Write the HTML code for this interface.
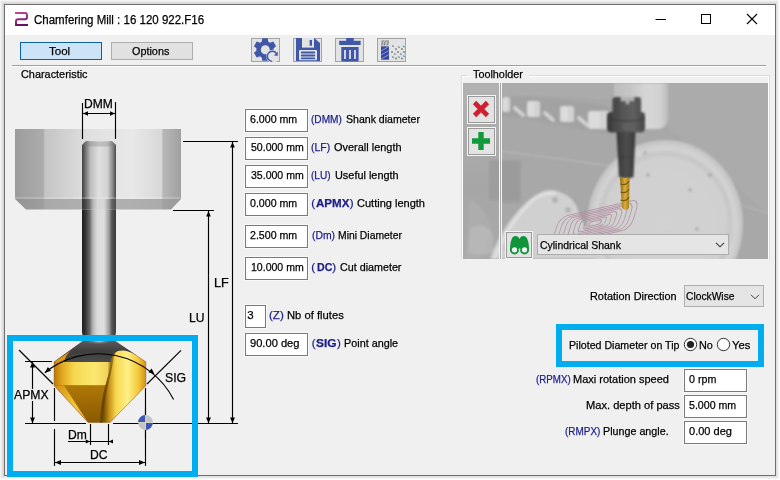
<!DOCTYPE html>
<html><head><meta charset="utf-8"><style>
html,body{margin:0;padding:0;width:780px;height:480px;overflow:hidden;background:#fff;font-family:"Liberation Sans",sans-serif;}
.a{position:absolute;box-sizing:border-box;}
.t{position:absolute;white-space:pre;transform-origin:0 0;font-family:"Liberation Sans",sans-serif;-webkit-text-stroke:0.25px currentColor;}

</style></head><body>
<div class="a" style="left:0px;top:0px;width:780px;height:480px;background:#fff"></div>
<div class="a" style="left:0px;top:0px;width:779px;height:479px;background:#f4f4f4"></div>
<div class="a" style="left:1px;top:1px;width:777px;height:477px;background:#e9e9e9"></div>
<div class="a" style="left:2px;top:2px;width:775px;height:475px;background:#e0e0e0"></div>
<div class="a" style="left:3px;top:3px;width:773px;height:473px;background:#d4d4d4"></div>
<div class="a" style="left:4px;top:4px;width:772px;height:472px;border:1px solid #6f6f6f;background:#f0f0f0"></div>
<div class="a" style="left:5px;top:5px;width:770px;height:30px;background:#fff"></div>
<svg class="a" style="left:0;top:0" width="40" height="40"><defs><linearGradient id="lg" x1="0" y1="0" x2="0.3" y2="1"><stop offset="0" stop-color="#c04a96"/><stop offset="1" stop-color="#6e0f5e"/></linearGradient></defs>
<path d="M15,13 H25.2 Q27,13 27,15 V17.3 Q27,19.2 25,19.2 H18 Q16,19.2 16,21.2 V25 H28" fill="none" stroke="url(#lg)" stroke-width="1.9"/></svg>
<svg class="a" style="left:640px;top:5px" width="135" height="30"><path d="M15.5,14.5 H26" stroke="#000" stroke-width="1" /><rect x="61.5" y="9.5" width="9" height="9" fill="none" stroke="#000" stroke-width="1"/><path d="M107,9 L117,19 M117,9 L107,19" stroke="#000" stroke-width="1.1"/></svg>
<div class="a" style="left:20px;top:42px;width:82px;height:18px;border:1px solid #0a5fa8;background:#cce4f7"></div>
<div class="a" style="left:111px;top:42px;width:82px;height:18px;border:1px solid #adadad;background:#e1e1e1"></div>
<div class="a" style="left:251px;top:38px;width:29px;height:24px;border:1px solid #a3a3a3;background:#e3e3e3"></div>
<div class="a" style="left:293px;top:38px;width:29px;height:24px;border:1px solid #a3a3a3;background:#e3e3e3"></div>
<div class="a" style="left:335px;top:38px;width:29px;height:24px;border:1px solid #a3a3a3;background:#e3e3e3"></div>
<div class="a" style="left:377px;top:38px;width:29px;height:24px;border:1px solid #a3a3a3;background:#e3e3e3"></div>
<div class="a" style="left:12px;top:65px;width:754px;height:1px;background:#a0a0a0"></div>
<div class="a" style="left:12px;top:66px;width:754px;height:1px;background:#fff"></div>
<svg class="a" style="left:240px;top:30px" width="180" height="40">
<g fill="#3f57a8"><circle cx="25" cy="19.5" r="8.6"/><path d="M21.60,12.50 L22.30,8.30 L27.70,8.30 L28.40,12.50 Z M29.36,13.06 L33.35,11.56 L36.05,16.24 L32.76,18.94 Z M32.76,20.06 L36.05,22.76 L33.35,27.44 L29.36,25.94 Z M28.40,26.50 L27.70,30.70 L22.30,30.70 L21.60,26.50 Z M20.64,25.94 L16.65,27.44 L13.95,22.76 L17.24,20.06 Z M17.24,18.94 L13.95,16.24 L16.65,11.56 L20.64,13.06 Z"/></g>
<circle cx="25.3" cy="19.7" r="4.5" fill="#e3e3e3"/>
<circle cx="32.7" cy="26.3" r="6.5" fill="#e3e3e3"/>
<path d="M36.4,23.2 A5.1,5.1 0 1 0 32.2,31.4" fill="none" stroke="#3f57a8" stroke-width="1.45"/>
<path d="M37.8,21.8 L37.8,25.8 L33.8,25.6 Z" fill="#3f57a8"/>
<g fill="#3f57a8">
<path d="M56,8 H74.2 L80,13 V31 H56 Z"/>
<rect x="62" y="8" width="12" height="9.6" fill="#e3e3e3"/>
<rect x="69.6" y="10" width="2.4" height="5.7"/>
<rect x="59" y="20" width="18" height="10.3" rx="1" fill="#e3e3e3"/>
<rect x="60.8" y="21.6" width="14.4" height="1.9" rx="0.9"/>
<rect x="60.8" y="24.5" width="14.4" height="1.9" rx="0.9"/>
<rect x="60.8" y="27.4" width="14.4" height="1.9" rx="0.9"/>
<rect x="106.2" y="8" width="7.6" height="3.2"/>
<rect x="99.2" y="10.8" width="21.4" height="4.2"/>
<path d="M101.3,17 H118.6 V30.5 Q118.6,31.6 117.5,31.6 H102.4 Q101.3,31.6 101.3,30.5 Z"/>
</g>
<g fill="#d0d4e0"><rect x="104" y="20" width="2" height="9"/><rect x="109" y="20" width="2" height="9"/><rect x="114" y="20" width="2" height="9"/></g>
<g>
<rect x="141" y="10" width="8" height="6" fill="#c4c4c4"/>
<path d="M142,15.5 Q141.5,12 143.5,10.5 M144.5,15.5 Q144,12 146.5,10.5 M147.5,15 Q148.5,12 148,10.5" stroke="#707070" stroke-width="0.9" fill="none"/>
<rect x="141" y="15.6" width="8" height="0.8" fill="#d8d0a0"/>
<rect x="141" y="16.4" width="8" height="13.3" fill="#3448a4"/>
<path d="M141,21 L149,16.5 M141,25 L149,20.5 M141,29 L149,24.5" stroke="#8a96c8" stroke-width="1"/>
<g fill="#8a9090"><circle cx="153" cy="16" r="1.1"/><circle cx="156" cy="19" r="1.1"/><circle cx="159" cy="17" r="1.1"/><circle cx="162" cy="19" r="1.1"/><circle cx="164" cy="16.5" r="1.1"/><circle cx="152" cy="22" r="1.1"/><circle cx="155" cy="24" r="1.1"/><circle cx="158" cy="22" r="1.1"/><circle cx="161" cy="24" r="1.1"/><circle cx="164" cy="22" r="1.1"/><circle cx="153" cy="27" r="1.1"/><circle cx="156" cy="28.5" r="1.1"/><circle cx="159" cy="27" r="1.1"/><circle cx="162" cy="28.5" r="1.1"/><circle cx="164" cy="26" r="1.1"/></g><g fill="#a8ecff"><circle cx="153.8" cy="15.2" r="0.8"/><circle cx="159.8" cy="16.2" r="0.8"/><circle cx="164.8" cy="15.7" r="0.8"/><circle cx="155.8" cy="23.2" r="0.8"/><circle cx="161.8" cy="23.2" r="0.8"/><circle cx="153.8" cy="26.2" r="0.8"/><circle cx="159.8" cy="26.2" r="0.8"/><circle cx="164.8" cy="25.2" r="0.8"/></g>
</g>
</svg>
<svg class="a" style="left:0;top:0" width="780" height="480"><defs>
<linearGradient id="hold" x1="15" x2="181" y1="0" y2="0" gradientUnits="userSpaceOnUse">
<stop offset="0" stop-color="#9c9c9c"/><stop offset="0.17" stop-color="#acacac"/><stop offset="0.18" stop-color="#c4c4c4"/>
<stop offset="0.45" stop-color="#e0e0e0"/><stop offset="0.7" stop-color="#e8e8e8"/><stop offset="0.885" stop-color="#d8d8d8"/>
<stop offset="0.89" stop-color="#b8b8b8"/><stop offset="1" stop-color="#a0a0a0"/></linearGradient>
<linearGradient id="holdc" x1="15" x2="181" y1="0" y2="0" gradientUnits="userSpaceOnUse">
<stop offset="0" stop-color="#939393"/><stop offset="0.17" stop-color="#9e9e9e"/><stop offset="0.18" stop-color="#a8a8a8"/>
<stop offset="0.5" stop-color="#b2b2b2"/><stop offset="0.885" stop-color="#ababab"/><stop offset="0.89" stop-color="#a2a2a2"/><stop offset="1" stop-color="#9a9a9a"/></linearGradient>
<linearGradient id="shank" x1="82" x2="116" y1="0" y2="0" gradientUnits="userSpaceOnUse">
<stop offset="0" stop-color="#1e1e1e"/><stop offset="0.1" stop-color="#333"/><stop offset="0.22" stop-color="#666"/>
<stop offset="0.32" stop-color="#b5b5b5"/><stop offset="0.45" stop-color="#dcdcdc"/><stop offset="0.65" stop-color="#dedede"/>
<stop offset="0.8" stop-color="#999"/><stop offset="0.88" stop-color="#555"/><stop offset="1" stop-color="#3a3a3a"/></linearGradient>
<linearGradient id="shankl" x1="82" x2="116" y1="0" y2="0" gradientUnits="userSpaceOnUse">
<stop offset="0" stop-color="#3e3e3e"/><stop offset="0.1" stop-color="#707070"/><stop offset="0.25" stop-color="#bdbdbd"/>
<stop offset="0.5" stop-color="#e0e0e0"/><stop offset="0.75" stop-color="#d2d2d2"/><stop offset="0.9" stop-color="#8a8a8a"/><stop offset="1" stop-color="#484848"/></linearGradient>
<linearGradient id="band" x1="54" x2="112" y1="0" y2="0" gradientUnits="userSpaceOnUse">
<stop offset="0" stop-color="#b87808"/><stop offset="0.14" stop-color="#e0a820"/><stop offset="0.35" stop-color="#f6d850"/>
<stop offset="0.7" stop-color="#fbe870"/><stop offset="0.92" stop-color="#f2d458"/><stop offset="1" stop-color="#7a5400"/></linearGradient>
<linearGradient id="lowc" x1="0" x2="0" y1="385" y2="422" gradientUnits="userSpaceOnUse">
<stop offset="0" stop-color="#b07808"/><stop offset="1" stop-color="#8a5a00"/></linearGradient>
<linearGradient id="flute" x1="104" x2="147" y1="0" y2="0" gradientUnits="userSpaceOnUse">
<stop offset="0" stop-color="#7a5200"/><stop offset="0.12" stop-color="#c89018"/><stop offset="0.28" stop-color="#f8d850"/>
<stop offset="0.55" stop-color="#fff088"/><stop offset="0.8" stop-color="#f4c838"/><stop offset="1" stop-color="#cc8810"/></linearGradient>
<linearGradient id="lface" x1="54" x2="88" y1="385" y2="422" gradientUnits="userSpaceOnUse">
<stop offset="0" stop-color="#d09010"/><stop offset="0.6" stop-color="#f4c83a"/><stop offset="1" stop-color="#e8b020"/></linearGradient>
<radialGradient id="hl" cx="99" cy="341" r="16" fx="99" fy="341" gradientUnits="userSpaceOnUse" gradientTransform="translate(99 341) scale(1 0.25) translate(-99 -341)">
<stop offset="0" stop-color="#d8d8d8"/><stop offset="1" stop-color="#444" stop-opacity="0"/></radialGradient>
<linearGradient id="cap" x1="0" x2="0" y1="341" y2="362" gradientUnits="userSpaceOnUse">
<stop offset="0" stop-color="#5a5a5a"/><stop offset="0.5" stop-color="#3e3e3e"/><stop offset="1" stop-color="#4a4a4a"/></linearGradient>
</defs>
<path d="M15,129 H181 V199 H15 Z" fill="url(#hold)"/>
<path d="M15,199 H181 L171,209.5 H26 Z" fill="url(#holdc)"/>
<path d="M82,145 L86,141 H112 L116,145 V199 H82 Z" fill="url(#shankl)"/>
<path d="M82.5,145 L86,141.5 H112 L115.5,145 V146.5 H82.5 Z" fill="#777" opacity="0.3"/>
<path d="M82,199 H116 V209.5 H82 Z" fill="url(#shank)" opacity="0.85"/>
<rect x="15" y="197.5" width="166" height="1" fill="#fff" opacity="0.35"/>
<path d="M82,209.5 H116 V332 Q116,335 114,338 L113,341 H85 L84,338 Q82,335 82,332 Z" fill="url(#shank)"/>
<path d="M83,341 H115 L146,362 V385.5 L110,422.5 H88 L54,385.5 V362 Z" fill="#7a5a10"/>
<path d="M83,341 H115 L136,355 Q120,358 112,362 H64 L54,362 Z" fill="url(#cap)"/>
<rect x="82" y="341" width="34" height="4" fill="url(#hl)"/>
<path d="M54,362 L72,350 Q66,354 64,362 Z" fill="#d89a10"/>
<path d="M54,362 H112 V385.5 H54 Z" fill="url(#band)"/>
<path d="M63,385.5 H108.5 L101,422.5 H88 Z" fill="url(#lowc)"/>
<path d="M54,385.5 H64 L88,422.5 Z" fill="url(#lface)"/>
<path d="M111,362 Q112,353 118,351 Q126,349 136,355 L146,362 V385.5 L110,422.5 H100 Q101,402 105,387 Q109,374 111,362 Z" fill="url(#flute)"/>
<path d="M111,362 Q109,374 105,387 Q101,402 100,422.5 H102.5 Q104,402 107.5,387 Q111,374 113,362 Q113.5,356 116,352 Q112,354 111,362 Z" fill="#5a3c00" opacity="0.55"/>
<path d="M83,341 L54,362 V385.5 L88,422.5 M115,341 L146,362 V385.5 L110,422.5" fill="none" stroke="#7a3060" stroke-width="0.5" opacity="0.6"/>
<path d="M82.5,103 V139 M115.5,102 V139 M83,113.5 H115" stroke="#000" stroke-width="1.15" fill="none"/>
<path d="M83,113.5 L88,111.25 L88,115.75 Z" fill="#000"/>
<path d="M115,113.5 L110,111.25 L110,115.75 Z" fill="#000"/>
<path d="M183,141.5 H238 M173,210.5 H214 M232.5,142 V423 M208.5,211 V423 M25,423.5 H86 M113,423.5 H238" stroke="#000" stroke-width="1.15" fill="none"/>
<path d="M232.5,142 L230.2,147.5 L234.8,147.5 Z" fill="#000"/>
<path d="M208.5,211 L206.2,216.5 L210.8,216.5 Z" fill="#000"/>
<path d="M232.5,423 L230.0,417.5 L235.0,417.5 Z" fill="#000"/>
<path d="M208.5,423 L206.0,417.5 L211.0,417.5 Z" fill="#000"/>
<path d="M19,350 L53,384 M25,361.5 H52 M32.5,362 V423 M54.5,388 V421 M54.5,429 V466 M145.5,388 V466 M147,384 L181,350.3" stroke="#000" stroke-width="1.15" fill="none"/>
<path d="M32.5,362 L30.0,367.5 L35.0,367.5 Z" fill="#000"/>
<path d="M32.5,423 L30.0,417.5 L35.0,417.5 Z" fill="#000"/>
<path d="M90.5,424 V445 M108.5,424 V445 M68,441.5 H112" stroke="#000" stroke-width="1.15" fill="none"/>
<path d="M90,441.5 L85.8,439.6 L85.8,443.4 Z" fill="#000"/>
<path d="M108.8,441.5 L113.0,439.6 L113.0,443.4 Z" fill="#000"/>
<path d="M55,462.5 H145" stroke="#000" stroke-width="1.15" fill="none"/>
<path d="M55,462.5 L61,460.0 L61,465.0 Z" fill="#000"/>
<path d="M145,462.5 L139,460.0 L139,465.0 Z" fill="#000"/>
<path d="M44.8,372.7 A85,85 0 0 1 173.6,399.4" stroke="#000" stroke-width="1.15" fill="none"/>
<path d="M44.80,372.70 L47.88,366.98 L51.03,370.86 Z" fill="#000"/>
<path d="M154.50,374.20 L148.33,372.15 L151.61,368.38 Z" fill="#000"/>
<circle cx="145.5" cy="422.5" r="7.4" fill="#c4c4c4"/>
<path d="M145.5,422.5 V415.1 A7.4,7.4 0 0 0 138.1,422.5 Z M145.5,422.5 V429.9 A7.4,7.4 0 0 0 152.9,422.5 Z" fill="#3d55b5"/>
<path d="M138,422.5 H153 M145.5,415 V430" stroke="#e8e4c8" stroke-width="1" opacity="0.8"/>
<path d="M145.5,407 V415 M145.5,430 V438 M130,423.5 H138 M153,423.5 H160" stroke="#000" stroke-width="1.1"/>
</svg>
<div class="a" style="left:7px;top:335px;width:191px;height:142px;border:6px solid #00adef"></div>
<div class="a" style="left:556px;top:324px;width:208px;height:43px;border:6px solid #00adef"></div>
<svg class="a" style="left:462px;top:83px" width="308" height="176" viewBox="462 83 308 176"><defs>
<filter id="bl" x="-10%" y="-10%" width="120%" height="120%"><feGaussianBlur stdDeviation="0.8"/></filter>
<filter id="bl2" x="-20%" y="-20%" width="140%" height="140%"><feGaussianBlur stdDeviation="3"/></filter>
<linearGradient id="spin" x1="614" x2="668" y1="0" y2="0" gradientUnits="userSpaceOnUse">
<stop offset="0" stop-color="#bdbdbd"/><stop offset="0.3" stop-color="#c6c6c6"/><stop offset="0.6" stop-color="#d6d6d6"/><stop offset="0.85" stop-color="#d2d2d2"/><stop offset="1" stop-color="#bcbcbc"/></linearGradient>
<linearGradient id="hold2" x1="608" x2="645" y1="0" y2="0" gradientUnits="userSpaceOnUse">
<stop offset="0" stop-color="#3a3a3a"/><stop offset="0.4" stop-color="#555"/><stop offset="0.7" stop-color="#606060"/><stop offset="1" stop-color="#444"/></linearGradient>
<linearGradient id="cone2" x1="616" x2="636" y1="0" y2="0" gradientUnits="userSpaceOnUse">
<stop offset="0" stop-color="#333"/><stop offset="0.5" stop-color="#4e4e4e"/><stop offset="1" stop-color="#3a3a3a"/></linearGradient>
<linearGradient id="lcol" x1="0" x2="0" y1="83" y2="259" gradientUnits="userSpaceOnUse">
<stop offset="0" stop-color="#b2b2b2"/><stop offset="0.6" stop-color="#a6a6a6"/><stop offset="1" stop-color="#aaaaaa"/></linearGradient>
<radialGradient id="plate" cx="665" cy="224" r="80" gradientTransform="translate(665 224) scale(0.975 1.05) translate(-665 -224)" gradientUnits="userSpaceOnUse">
<stop offset="0" stop-color="#d2d2d2"/><stop offset="0.78" stop-color="#d0d0d0"/><stop offset="0.84" stop-color="#c6c6c6"/><stop offset="0.9" stop-color="#d4d4d4"/><stop offset="1" stop-color="#c2c2c2"/></radialGradient>
<linearGradient id="drill" x1="620" x2="630" y1="0" y2="0" gradientUnits="userSpaceOnUse">
<stop offset="0" stop-color="#8a6a10"/><stop offset="0.5" stop-color="#dcae3a"/><stop offset="1" stop-color="#9a7410"/></linearGradient>
</defs>
<rect x="462" y="83" width="308" height="176" fill="#a8a8a8"/>
<g filter="url(#bl)">
<rect x="462" y="83" width="38" height="176" fill="url(#lcol)"/>
<path d="M470,200 Q485,205 490,230 L480,259 H466 Z" fill="#b0b0b0" opacity="0.6"/>
<path d="M470,228 Q482,222 492,232 L494,252 Q482,258 468,252 Z" fill="#bababa" opacity="0.7"/>
<path d="M500,83 H614 V100 Q560,95 500,96 Z" fill="#ababab"/>
<path d="M500,96 Q560,95 614,108 V135 Q560,125 500,115 Z" fill="#a2a2a2"/>
<path d="M668,83 H770 V215 Q740,190 700,150 L668,129 Z" fill="#ababab"/>
<path d="M500,151 L612,166" stroke="#b6b6b6" stroke-width="1.4"/>
<path d="M742,205 L770,214" stroke="#bababa" stroke-width="1.2"/>
<rect x="500" y="163" width="20" height="40" fill="#9a9a9a" opacity="0.7"/>
<rect x="502" y="97" width="8" height="15" rx="2.5" fill="#d2d2d2"/>
<rect x="503" y="98" width="4.0" height="13" rx="2" fill="#dcdcdc"/>
<rect x="527" y="101" width="13" height="16" rx="2.5" fill="#d2d2d2"/>
<rect x="528" y="102" width="6.5" height="14" rx="2" fill="#dcdcdc"/>
<rect x="560" y="106" width="14" height="16" rx="2.5" fill="#d2d2d2"/>
<rect x="561" y="107" width="7.0" height="14" rx="2" fill="#dcdcdc"/>
<rect x="588" y="111" width="22" height="18" rx="2.5" fill="#d2d2d2"/>
<rect x="589" y="112" width="11.0" height="16" rx="2" fill="#dcdcdc"/>
<path d="M515,108 L523,115" stroke="#d4d4d4" stroke-width="3.6" stroke-linecap="round"/>
<path d="M545,113 L553,120" stroke="#d4d4d4" stroke-width="3.6" stroke-linecap="round"/>
<path d="M579,118 L587,125" stroke="#d4d4d4" stroke-width="3.6" stroke-linecap="round"/>
<path d="M614,83 H668 V118 Q668,128 658,129 H614 Z" fill="url(#spin)"/>
<ellipse cx="665" cy="224" rx="78" ry="84" fill="url(#plate)"/>
<path d="M490,259 Q503,222 530,199 Q545,187 557,191 Q576,197 579,214 L600,259 Z" fill="#d0d0d0"/>
<path d="M494,259 Q508,224 532,201 Q545,191 556,194" stroke="#e2e2e2" stroke-width="2.5" fill="none"/>
<rect x="489" y="160" width="32" height="40" rx="2" fill="#999" opacity="0.75"/>
<circle cx="645" cy="153" r="2" fill="#b2b2b2"/>
<circle cx="648" cy="175" r="2" fill="#b2b2b2"/>
<circle cx="710" cy="175" r="2.3" fill="#b2b2b2"/>
<circle cx="690" cy="190" r="2" fill="#b2b2b2"/>
<circle cx="697" cy="229" r="2" fill="#b2b2b2"/>
<circle cx="555" cy="200" r="3" fill="#b2b2b2"/>
<circle cx="568" cy="210" r="2.8" fill="#b2b2b2"/>
</g>
<g transform="translate(595,223) rotate(-13) skewX(-30)" opacity="0.85"><rect x="-41.0" y="-13.5" width="82.0" height="27.0" rx="8.1" fill="none" stroke="#b48ca2" stroke-width="0.95"/><rect x="-36.0" y="-11.8" width="72.0" height="23.7" rx="7.1" fill="none" stroke="#b48ca2" stroke-width="0.95"/><rect x="-31.0" y="-10.2" width="62.0" height="20.4" rx="6.1" fill="none" stroke="#b48ca2" stroke-width="0.95"/><rect x="-26.0" y="-8.6" width="52.0" height="17.1" rx="5.1" fill="none" stroke="#b48ca2" stroke-width="0.95"/><rect x="-21.0" y="-6.9" width="42.0" height="13.8" rx="4.1" fill="none" stroke="#b48ca2" stroke-width="0.95"/><rect x="-16.0" y="-5.2" width="32.0" height="10.5" rx="3.1" fill="none" stroke="#b48ca2" stroke-width="0.95"/><rect x="-11.0" y="-3.6" width="22.0" height="7.2" rx="2.2" fill="none" stroke="#b48ca2" stroke-width="0.95"/><rect x="-6.0" y="-2.0" width="12.0" height="3.9" rx="1.2" fill="none" stroke="#b48ca2" stroke-width="0.95"/></g>
<g filter="url(#bl)">
<path d="M612.5,100 Q612.5,97 616,97 H638 Q641,97 641,100 V113 H612.5 Z" fill="url(#hold2)"/>
<path d="M621,97 H634 V101 H629 V104 H626 V101 H621 Z" fill="#b0b0b0"/>
<path d="M607,116 Q607,112 611,112 H641 Q645,112 645,116 V128 Q645,132 641,132.5 H611 Q607,132 607,128 Z" fill="url(#hold2)"/>
<path d="M607,119 Q626,123 645,119" stroke="#383838" stroke-width="1" fill="none"/>
<circle cx="627" cy="126.5" r="4.2" fill="#606060"/>
<path d="M616.5,132 H635.5 L633.5,177 Q626,180 619,177 Z" fill="url(#cone2)"/>
<path d="M618.5,156 Q626,158 634.5,156" stroke="#3a3a3a" stroke-width="1" fill="none"/>
</g>
<path d="M620,178 H629.5 L629,208 Q626,212 622,208 Z" fill="url(#drill)"/>
<path d="M620.5,184 Q626,186 629,181 M620.5,192 Q626,194 629,189 M620.5,200 Q626,202 629,197" stroke="#7a5a08" stroke-width="1.2" fill="none"/>
<rect x="499" y="83" width="1" height="176" fill="#f4f4f4"/><rect x="500" y="83" width="1" height="176" fill="#a8a8a8"/><rect x="501" y="83" width="1" height="176" fill="#f4f4f4"/>
</svg>
<div class="a" style="left:245px;top:109px;width:63px;height:23px;border:1px solid #7a7a7a;background:#fff;box-shadow:0 0 0 1px rgba(255,255,255,0.5)"></div>
<div class="a" style="left:245px;top:137px;width:63px;height:23px;border:1px solid #7a7a7a;background:#fff;box-shadow:0 0 0 1px rgba(255,255,255,0.5)"></div>
<div class="a" style="left:245px;top:165px;width:63px;height:23px;border:1px solid #7a7a7a;background:#fff;box-shadow:0 0 0 1px rgba(255,255,255,0.5)"></div>
<div class="a" style="left:245px;top:193px;width:63px;height:23px;border:1px solid #7a7a7a;background:#fff;box-shadow:0 0 0 1px rgba(255,255,255,0.5)"></div>
<div class="a" style="left:245px;top:225px;width:63px;height:23px;border:1px solid #7a7a7a;background:#fff;box-shadow:0 0 0 1px rgba(255,255,255,0.5)"></div>
<div class="a" style="left:245px;top:257px;width:63px;height:23px;border:1px solid #7a7a7a;background:#fff;box-shadow:0 0 0 1px rgba(255,255,255,0.5)"></div>
<div class="a" style="left:245px;top:333px;width:63px;height:23px;border:1px solid #7a7a7a;background:#fff;box-shadow:0 0 0 1px rgba(255,255,255,0.5)"></div>
<div class="a" style="left:245px;top:305px;width:21px;height:23px;border:1px solid #7a7a7a;background:#fff;box-shadow:0 0 0 1px rgba(255,255,255,0.5)"></div>
<div class="a" style="left:684px;top:369px;width:63px;height:23px;border:1px solid #7a7a7a;background:#fff;box-shadow:0 0 0 1px rgba(255,255,255,0.5)"></div>
<div class="a" style="left:684px;top:395px;width:63px;height:23px;border:1px solid #7a7a7a;background:#fff;box-shadow:0 0 0 1px rgba(255,255,255,0.5)"></div>
<div class="a" style="left:684px;top:421px;width:63px;height:23px;border:1px solid #7a7a7a;background:#fff;box-shadow:0 0 0 1px rgba(255,255,255,0.5)"></div>
<svg class="a" style="left:0;top:0" width="780" height="480"><path d="M468,75.5 H461.5 V259 M529,75.5 H769.5 V259" fill="none" stroke="#dcdcdc" stroke-width="1"/><path d="M470,76.5 H462.5 V259 M529,76.5 H768.5 V259" fill="none" stroke="#fff" stroke-width="1"/></svg>
<div class="a" style="left:467px;top:95px;width:29px;height:29px;border:1px solid #f4f4f4;background:#a8a8a8"></div>
<div class="a" style="left:468px;top:96px;width:27px;height:27px;border:1px solid #9a9a9a;background:#e3e3e3"></div>
<div class="a" style="left:467px;top:127px;width:29px;height:29px;border:1px solid #f4f4f4;background:#a8a8a8"></div>
<div class="a" style="left:468px;top:128px;width:27px;height:27px;border:1px solid #9a9a9a;background:#e3e3e3"></div>
<svg class="a" style="left:0;top:0" width="780" height="480"><path d="M474.5,102.5 L487.5,115.5 M487.5,102.5 L474.5,115.5" stroke="#d0202f" stroke-width="4.6" stroke-linecap="butt"/><path d="M481,132 V150 M472,141 H490" stroke="#119a3c" stroke-width="5.4"/></svg>
<div class="a" style="left:505px;top:231px;width:28px;height:28px;border:1px solid #f4f4f4;background:#a8a8a8"></div>
<div class="a" style="left:506px;top:232px;width:26px;height:26px;border:1px solid #9a9a9a;background:#e3e3e3"></div>
<svg class="a" style="left:0;top:0" width="780" height="480"><g fill="#10953c"><path d="M510,250 Q510,243 511.5,239.5 Q512.5,236 515.5,236 Q518.5,236 519.5,239 Q520.5,236 523.5,236 Q526.5,236 527.5,239.5 Q529,243 529,250 Z"/><circle cx="514.5" cy="249.8" r="4.6"/><circle cx="524.5" cy="249.8" r="4.6"/></g><circle cx="514.5" cy="249.8" r="2.6" fill="#f2f2f2"/><circle cx="524.5" cy="249.8" r="2.6" fill="#f2f2f2"/><circle cx="519.5" cy="249.5" r="0.9" fill="#f2f2f2"/></svg>
<div class="a" style="left:537px;top:234px;width:192px;height:21px;border:1px solid #adadad;background:#e5e5e5"></div>
<div class="a" style="left:684px;top:285px;width:80px;height:22px;border:1px solid #adadad;background:#e5e5e5"></div>
<svg class="a" style="left:0;top:0" width="780" height="480"><path d="M716,242.8 L720,246.8 L724,242.8" fill="none" stroke="#3a3a3a" stroke-width="1.1"/><path d="M751,294.8 L755,298.8 L759,294.8" fill="none" stroke="#404040" stroke-width="1"/><circle cx="690.5" cy="344.5" r="6.2" fill="#fff" stroke="#333" stroke-width="1"/><circle cx="690.5" cy="344.5" r="3.6" fill="#222"/><circle cx="723.5" cy="344.5" r="6.2" fill="#fff" stroke="#333" stroke-width="1"/></svg>
<div class="t" style="left:33.96px;top:14.02px;font-size:12.5px;line-height:12.5px;transform:scaleX(0.9204);color:#000;">Chamfering Mill : 16 120 922.F16</div>
<div class="t" style="left:49.30px;top:45.87px;font-size:11.5px;line-height:11.5px;transform:scaleX(1.0045);color:#000;">Tool</div>
<div class="t" style="left:131.94px;top:45.87px;font-size:11.5px;line-height:11.5px;transform:scaleX(0.9420);color:#000;">Options</div>
<div class="t" style="left:21.04px;top:68.87px;font-size:11.5px;line-height:11.5px;transform:scaleX(0.9464);color:#000;">Characteristic</div>
<div class="t" style="left:473.34px;top:68.87px;font-size:11.5px;line-height:11.5px;transform:scaleX(0.9409);color:#000;">Toolholder</div>
<div class="t" style="left:249.95px;top:113.87px;font-size:11.5px;line-height:11.5px;transform:scaleX(0.9234);color:#000;">6.000 mm</div>
<div class="t" style="left:250.56px;top:141.87px;font-size:11.5px;line-height:11.5px;transform:scaleX(0.9163);color:#000;">50.000 mm</div>
<div class="t" style="left:250.56px;top:169.87px;font-size:11.5px;line-height:11.5px;transform:scaleX(0.9163);color:#000;">35.000 mm</div>
<div class="t" style="left:249.95px;top:197.87px;font-size:11.5px;line-height:11.5px;transform:scaleX(0.9234);color:#000;">0.000 mm</div>
<div class="t" style="left:249.95px;top:229.87px;font-size:11.5px;line-height:11.5px;transform:scaleX(0.9234);color:#000;">2.500 mm</div>
<div class="t" style="left:250.56px;top:261.87px;font-size:11.5px;line-height:11.5px;transform:scaleX(0.9163);color:#000;">10.000 mm</div>
<div class="t" style="left:247.30px;top:309.87px;font-size:11.5px;line-height:11.5px;transform:scaleX(1.0000);color:#000;">3</div>
<div class="t" style="left:249.92px;top:337.87px;font-size:11.5px;line-height:11.5px;transform:scaleX(0.9667);color:#000;">90.00 deg</div>
<div class="t" style="left:311.18px;top:113.87px;font-size:11.5px;line-height:11.5px;transform:scaleX(0.8791);color:#1c1c8a;">(DMM)</div>
<div class="t" style="left:345.86px;top:113.87px;font-size:11.5px;line-height:11.5px;transform:scaleX(0.9177);color:#000;">Shank diameter</div>
<div class="t" style="left:311.36px;top:141.87px;font-size:11.5px;line-height:11.5px;transform:scaleX(0.9107);color:#1c1c8a;">(LF)</div>
<div class="t" style="left:334.03px;top:141.87px;font-size:11.5px;line-height:11.5px;transform:scaleX(0.9519);color:#000;">Overall length</div>
<div class="t" style="left:311.38px;top:169.87px;font-size:11.5px;line-height:11.5px;transform:scaleX(0.8795);color:#1c1c8a;">(LU)</div>
<div class="t" style="left:334.64px;top:169.87px;font-size:11.5px;line-height:11.5px;transform:scaleX(0.9482);color:#000;">Useful length</div>
<div class="t" style="left:311.30px;top:197.87px;font-size:11.5px;line-height:11.5px;transform:scaleX(1.0000);color:#1c1c8a;">(</div>
<div class="t" style="left:316.29px;top:197.87px;font-size:11.5px;line-height:11.5px;transform:scaleX(1.0082);color:#1c1c8a;font-weight:bold;">APMX</div>
<div class="t" style="left:349.80px;top:197.87px;font-size:11.5px;line-height:11.5px;transform:scaleX(1.0000);color:#1c1c8a;">)</div>
<div class="t" style="left:357.33px;top:197.87px;font-size:11.5px;line-height:11.5px;transform:scaleX(0.9576);color:#000;">Cutting length</div>
<div class="t" style="left:311.57px;top:229.87px;font-size:11.5px;line-height:11.5px;transform:scaleX(0.9003);color:#1c1c8a;">(Dm)</div>
<div class="t" style="left:337.77px;top:229.87px;font-size:11.5px;line-height:11.5px;transform:scaleX(0.9008);color:#000;">Mini Diameter</div>
<div class="t" style="left:311.30px;top:261.87px;font-size:11.5px;line-height:11.5px;transform:scaleX(1.0000);color:#1c1c8a;">(</div>
<div class="t" style="left:317.05px;top:261.87px;font-size:11.5px;line-height:11.5px;transform:scaleX(0.9216);color:#1c1c8a;font-weight:bold;">DC</div>
<div class="t" style="left:332.30px;top:261.87px;font-size:11.5px;line-height:11.5px;transform:scaleX(1.0000);color:#1c1c8a;">)</div>
<div class="t" style="left:340.25px;top:261.87px;font-size:11.5px;line-height:11.5px;transform:scaleX(0.9330);color:#000;">Cut diameter</div>
<div class="t" style="left:268.99px;top:309.87px;font-size:11.5px;line-height:11.5px;transform:scaleX(1.0082);color:#1c1c8a;">(Z)</div>
<div class="t" style="left:286.72px;top:309.87px;font-size:11.5px;line-height:11.5px;transform:scaleX(0.9760);color:#000;">Nb of flutes</div>
<div class="t" style="left:311.70px;top:337.87px;font-size:11.5px;line-height:11.5px;transform:scaleX(1.0000);color:#1c1c8a;">(</div>
<div class="t" style="left:316.47px;top:337.87px;font-size:11.5px;line-height:11.5px;transform:scaleX(1.0365);color:#1c1c8a;font-weight:bold;">SIG</div>
<div class="t" style="left:336.90px;top:337.87px;font-size:11.5px;line-height:11.5px;transform:scaleX(1.0000);color:#1c1c8a;">)</div>
<div class="t" style="left:344.34px;top:337.87px;font-size:11.5px;line-height:11.5px;transform:scaleX(0.9408);color:#000;">Point angle</div>
<div class="t" style="left:539.56px;top:239.87px;font-size:11.5px;line-height:11.5px;transform:scaleX(0.9105);color:#000;">Cylindrical Shank</div>
<div class="t" style="left:589.64px;top:290.87px;font-size:11.5px;line-height:11.5px;transform:scaleX(0.9479);color:#000;">Rotation Direction</div>
<div class="t" style="left:685.98px;top:290.87px;font-size:11.5px;line-height:11.5px;transform:scaleX(0.8928);color:#000;">ClockWise</div>
<div class="t" style="left:569.05px;top:339.87px;font-size:11.5px;line-height:11.5px;transform:scaleX(0.9237);color:#000;">Piloted Diameter on Tip</div>
<div class="t" style="left:699.04px;top:339.87px;font-size:11.5px;line-height:11.5px;transform:scaleX(0.9414);color:#000;">No</div>
<div class="t" style="left:731.61px;top:339.87px;font-size:11.5px;line-height:11.5px;transform:scaleX(0.9794);color:#000;">Yes</div>
<div class="t" style="left:535.61px;top:373.87px;font-size:11.5px;line-height:11.5px;transform:scaleX(0.8473);color:#1c1c8a;">(RPMX)</div>
<div class="t" style="left:573.43px;top:373.87px;font-size:11.5px;line-height:11.5px;transform:scaleX(0.9560);color:#000;">Maxi rotation speed</div>
<div class="t" style="left:585.72px;top:400.37px;font-size:11.5px;line-height:11.5px;transform:scaleX(0.9660);color:#000;">Max. depth of pass</div>
<div class="t" style="left:565.29px;top:425.87px;font-size:11.5px;line-height:11.5px;transform:scaleX(0.8649);color:#1c1c8a;">(RMPX)</div>
<div class="t" style="left:603.15px;top:425.87px;font-size:11.5px;line-height:11.5px;transform:scaleX(0.9330);color:#000;">Plunge angle.</div>
<div class="t" style="left:689.25px;top:373.87px;font-size:11.5px;line-height:11.5px;transform:scaleX(0.9294);color:#000;">0 rpm</div>
<div class="t" style="left:689.05px;top:400.37px;font-size:11.5px;line-height:11.5px;transform:scaleX(0.9234);color:#000;">5.000 mm</div>
<div class="t" style="left:689.03px;top:425.87px;font-size:11.5px;line-height:11.5px;transform:scaleX(0.9597);color:#000;">0.00 deg</div>
<div class="t" style="left:83.80px;top:98.14px;font-size:12px;line-height:12px;transform:scaleX(1.0046);color:#000;">DMM</div>
<div class="t" style="left:214.26px;top:277.14px;font-size:12px;line-height:12px;transform:scaleX(1.0526);color:#000;">LF</div>
<div class="t" style="left:188.99px;top:312.14px;font-size:12px;line-height:12px;transform:scaleX(1.0109);color:#000;">LU</div>
<div class="t" style="left:13.99px;top:389.14px;font-size:12px;line-height:12px;transform:scaleX(1.0177);color:#000;background:#f0f0f0;">APMX</div>
<div class="t" style="left:165.18px;top:372.14px;font-size:12px;line-height:12px;transform:scaleX(1.0218);color:#000;">SIG</div>
<div class="t" style="left:68.49px;top:429.14px;font-size:12px;line-height:12px;transform:scaleX(1.0073);color:#000;">Dm</div>
<div class="t" style="left:90.49px;top:449.14px;font-size:12px;line-height:12px;transform:scaleX(1.0096);color:#000;">DC</div>

</body></html>
